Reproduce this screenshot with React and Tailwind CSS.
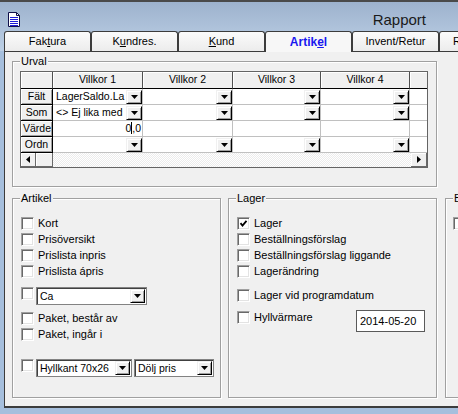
import React from 'react'

const colW = ['w-[90px]', 'w-[90px]', 'w-[88px]', 'w-[89px]']

function DocIcon() {
  return (
    <svg width="12" height="15" viewBox="0 0 12 15" className="mt-[10px] ml-[8px] shrink-0">
      <path d="M0.5 0.5H8.5L11.5 3.5V14.5H0.5Z" fill="#fff" stroke="#10104a" />
      <path d="M8.5 0.5V3.5H11.5" fill="none" stroke="#10104a" />
      <rect x="2" y="5" width="8" height="1" fill="#1c1cd8" />
      <rect x="2" y="7" width="8" height="1" fill="#1c1cd8" />
      <rect x="2" y="9" width="8" height="1" fill="#1c1cd8" />
      <rect x="2" y="11" width="8" height="1" fill="#1c1cd8" />
      <rect x="2" y="13" width="8" height="1" fill="#1c1cd8" />
    </svg>
  )
}

function Down() {
  return (
    <svg width="7" height="4" viewBox="0 0 7 4">
      <path d="M0 0H7L3.5 4Z" fill="#000" />
    </svg>
  )
}

function DropBtn({ className = '' }) {
  return (
    <span className={`flex items-center justify-center shrink-0 bg-[#f0f0f0] border border-t-[#f0f0f0] border-l-[#f0f0f0] border-r-black border-b-black shadow-[inset_1px_1px_0_#fff,inset_-1px_-1px_0_#a0a0a0] ${className}`}>
      <Down />
    </span>
  )
}

function Checkbox({ checked }) {
  return (
    <span className="w-[13px] h-[13px] shrink-0 bg-white border border-t-[#a0a0a0] border-l-[#a0a0a0] border-r-white border-b-white shadow-[inset_1px_1px_0_#696969,inset_-1px_-1px_0_#e3e3e3] flex items-center justify-center">
      {checked && (
        <svg width="9" height="9" viewBox="0 0 9 9">
          <polyline points="1.5,4.2 3.5,6.5 7.5,1.8" fill="none" stroke="#000" strokeWidth="1.8" />
        </svg>
      )}
    </span>
  )
}

function CheckRow({ label, checked, className = '' }) {
  return (
    <div className={`h-[16px] pt-[2px] flex items-start gap-[4px] ${className}`}>
      <Checkbox checked={checked} />
      <span className="text-[11px] leading-[13px] whitespace-nowrap">{label}</span>
    </div>
  )
}

function Combo({ text, className = '' }) {
  return (
    <div className={`h-[18px] shrink-0 bg-white border border-[#828282] shadow-[inset_1px_1px_0_#404040] flex items-center ${className}`}>
      <span className="flex-1 pl-[3px] text-[10.5px] leading-[12px] whitespace-nowrap overflow-hidden">{text}</span>
      <DropBtn className="w-[15px] h-[14px] mr-[1px]" />
    </div>
  )
}

function Group({ title, className = '', children }) {
  return (
    <fieldset className={`shrink-0 border border-[#a0a0a0] shadow-[inset_1px_1px_0_#fff,1px_1px_0_#fff] ${className}`}>
      <legend className="ml-[7px] px-[1px] bg-[#f0f0f0] text-[11px] leading-[12px] whitespace-nowrap">{title}</legend>
      {children}
    </fieldset>
  )
}

function HeadCell({ className = '', children }) {
  return (
    <div className={`shrink-0 flex items-center justify-center bg-[#f0f0f0] border-r border-b border-r-[#505050] border-b-black shadow-[inset_1px_1px_0_#fff] ${className}`}>
      {children}
    </div>
  )
}

function RowHead({ children }) {
  return (
    <div className="w-[32px] shrink-0 px-[2px] bg-[#f0f0f0] border-r border-b border-black shadow-[inset_1px_1px_0_#fff,inset_-1px_-1px_0_#a0a0a0] text-center overflow-hidden whitespace-nowrap leading-[15px]">
      {children}
    </div>
  )
}

function Cell({ className = '', drop, children, right }) {
  return (
    <div className={`shrink-0 flex items-start border-r border-b border-[#c0c0c0] bg-white overflow-hidden ${className}`}>
      <span className={`flex-1 pl-[3px] leading-[15px] whitespace-nowrap overflow-hidden ${right ? 'text-right pr-[1px]' : ''}`}>{children}</span>
      {drop && <DropBtn className="w-[16px] h-[14px] mt-[1px]" />}
    </div>
  )
}

const rows = [
  { head: 'Fält', cells: ['LagerSaldo.La', '', '', ''], drop: true },
  { head: 'Som', cells: ['<> Ej lika med', '', '', ''], drop: true },
  { head: 'Värde', cells: ['value', '', '', ''], drop: false },
  { head: 'Ordn', cells: ['', '', '', ''], drop: true },
]

function Grid() {
  return (
    <div className="w-[408px] h-[97px] border border-[#646464] bg-white flex flex-col text-[10.5px]">
      <div className="flex h-[17px] shrink-0">
        <HeadCell className="w-[32px]" />
        {['Villkor 1', 'Villkor 2', 'Villkor 3', 'Villkor 4'].map((t, i) => (
          <HeadCell key={t} className={colW[i]}>{t}</HeadCell>
        ))}
        <div className="flex-1 bg-[#f0f0f0] border-b border-black shadow-[inset_1px_1px_0_#fff]" />
      </div>
      {rows.map(r => (
        <div key={r.head} className="flex h-[16px] shrink-0">
          <RowHead>{r.head}</RowHead>
          {r.cells.map((c, i) => (
            <Cell key={i} className={colW[i]} drop={r.drop} right={c === 'value'}>
              {c === 'value' ? (
                <>0<span className="inline-block w-px h-[12px] bg-black align-[-2px]" />,0</>
              ) : c}
            </Cell>
          ))}
          <div className="flex-1 border-b border-[#c0c0c0]" />
        </div>
      ))}
      <div className="flex flex-1">
        <span className="w-[15px] shrink-0 flex items-center justify-center bg-[#f0f0f0] border-r border-b border-r-[#696969] border-b-[#696969] shadow-[inset_1px_1px_0_#fff]">
          <svg width="4" height="7" viewBox="0 0 4 7"><path d="M4 0V7L0 3.5Z" fill="#000" /></svg>
        </span>
        <span className="w-[17px] shrink-0 bg-[#f0f0f0] border-r border-b border-r-[#696969] border-b-[#696969] shadow-[inset_1px_1px_0_#fff]" />
        <span className="flex-1 bg-[repeating-conic-gradient(#ececec_0_25%,#fff_0_50%)] bg-[length:2px_2px]" />
        <span className="w-[16px] shrink-0 flex items-center justify-center bg-[#f0f0f0] border-r border-b border-r-[#696969] border-b-[#696969] shadow-[inset_1px_1px_0_#fff]">
          <svg width="4" height="7" viewBox="0 0 4 7"><path d="M0 0V7L4 3.5Z" fill="#000" /></svg>
        </span>
      </div>
    </div>
  )
}

function Tab({ active, last, children }) {
  if (active) {
    return (
      <div className="relative z-10 w-[87px] h-[21px] -mb-px shrink-0 border border-b-0 border-[#3c3c3c] rounded-t-[3px] bg-[#f7f7f7] flex items-center justify-center pb-[1px] text-[12px] font-bold text-[#1717f0]">
        {children}
      </div>
    )
  }
  return (
    <div className={`w-[87px] h-[20px] shrink-0 border border-b-0 border-[#3c3c3c] rounded-t-[3px] bg-linear-to-b from-[#fbfbfb] to-[#ececec] flex items-center text-[11px] ${last ? 'pl-[13px]' : 'justify-center'}`}>
      {children}
    </div>
  )
}

export default function App() {
  return (
    <div className="w-[458px] h-[414px] overflow-hidden bg-[#a6bfdd] font-['Liberation_Sans',Arial,sans-serif] text-black flex flex-col">
      <div className="bg-linear-to-b from-[#9cb1cc] to-[#bdd0e6] shrink-0">
        <div className="h-[31px] border-t-2 border-[#4a4a4a] flex items-start">
          <DocIcon />
          <div className="ml-auto mr-[32px] mt-[9px] text-[15px] leading-[18px] text-[#1a1a1a]">Rapport</div>
        </div>
        <div className="h-[20px] pl-[4px] flex items-end">
          <Tab>Fak<span className="underline">t</span>ura</Tab>
          <Tab>K<span className="underline">u</span>ndres.</Tab>
          <Tab><span className="underline">K</span>und</Tab>
          <Tab active>Artik<span className="underline">e</span>l</Tab>
          <Tab>Invent/Retur</Tab>
          <Tab last>R</Tab>
        </div>
      </div>

      <div className="ml-[4px] w-[470px] h-[357px] shrink-0 border-l border-t border-b-2 border-[#3c3c3c] bg-[#f0f0f0] pl-[7px] pt-[3px]">
        <Group title="Urval" className="w-[425px] h-[132px]">
          <div className="pt-[4px] pl-[7px]">
            <Grid />
          </div>
        </Group>

        <div className="flex mt-[5px]">
          <Group title="Artikel" className="w-[209px] h-[206px]">
            <div className="pt-[11px] pl-[8px] flex flex-col">
              <CheckRow label="Kort" />
              <CheckRow label="Prisöversikt" />
              <CheckRow label="Prislista inpris" />
              <CheckRow label="Prislista ápris" />
              <div className="mt-[8px] flex items-start gap-[2px]">
                <Checkbox />
                <Combo text="Ca" className="w-[111px]" />
              </div>
              <CheckRow label="Paket, består av" className="mt-[5px]" />
              <CheckRow label="Paket, ingår i" />
              <div className="mt-[17px] flex items-start gap-[2px]">
                <Checkbox />
                <Combo text="Hyllkant 70x26" className="w-[96px]" />
                <Combo text="Dölj pris" className="w-[80px]" />
              </div>
            </div>
          </Group>

          <Group title="Lager" className="w-[209px] h-[206px] ml-[7px]">
            <div className="pt-[11px] pl-[8px] flex flex-col">
              <CheckRow label="Lager" checked />
              <CheckRow label="Beställningsförslag" />
              <CheckRow label="Beställningsförslag liggande" />
              <CheckRow label="Lagerändring" />
              <CheckRow label="Lager vid programdatum" className="mt-[8px]" />
              <div className="mt-[6px] flex items-start">
                <CheckRow label="Hyllvärmare" className="w-[119px]" />
                <div className="mt-[1px] w-[69px] h-[22px] bg-white border border-[#5a5a5a] pl-[3px] text-[11px] leading-[20px]">2014-05-20</div>
              </div>
            </div>
          </Group>

          <Group title="B" className="w-[100px] h-[206px] ml-[8px]">
            <div className="pt-[11px] pl-[7px]">
              <CheckRow label="" />
            </div>
          </Group>
        </div>
      </div>
    </div>
  )
}
